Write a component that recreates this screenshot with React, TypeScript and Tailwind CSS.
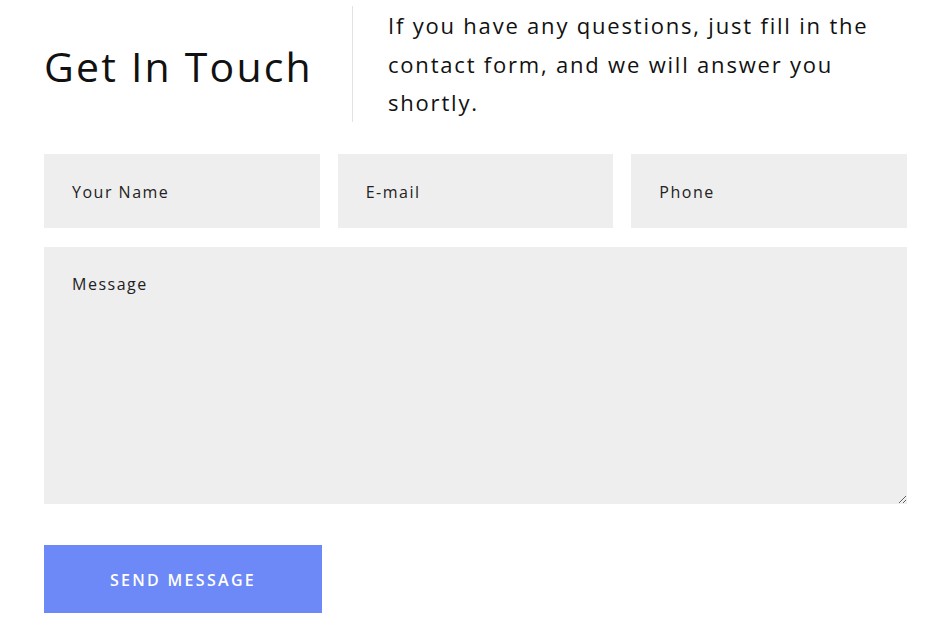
export default function App() {
  return (
    <div className="min-h-screen bg-white font-['Open_Sans',sans-serif] text-[#111]">
      <div className="ml-[44px] w-[863px] pt-[6px]">
        {/* Header */}
        <div className="flex items-center">
          <h1 className="w-[308px] shrink-0 pt-[6px] text-[41px] leading-none tracking-[2.2px] text-[#111]">
            Get In Touch
          </h1>
          <p className="border-l border-[#e2e2e2] pl-[35px] text-[22px] leading-[38.5px] tracking-[1.8px] text-[#111]">
            If you have any questions, just fill in the
            <br />
            contact form, and we will answer you
            <br />
            shortly.
          </p>
        </div>

        {/* Form */}
        <form className="mt-[32px] flex flex-col">
          <div className="grid grid-cols-3 gap-[18px]">
            <input
              placeholder="Your Name"
              className="h-[74px] bg-[#eeeeee] px-[28px] pt-[2px] text-[16px] tracking-[1.5px] text-[#222] outline-none placeholder:text-[#222]"
            />
            <input
              placeholder="E-mail"
              className="h-[74px] bg-[#eeeeee] px-[28px] pt-[2px] text-[16px] tracking-[1.5px] text-[#222] outline-none placeholder:text-[#222]"
            />
            <input
              placeholder="Phone"
              className="h-[74px] bg-[#eeeeee] px-[28px] pt-[2px] text-[16px] tracking-[1.5px] text-[#222] outline-none placeholder:text-[#222]"
            />
          </div>
          <textarea
            placeholder="Message"
            className="mt-[19px] block h-[257px] bg-[#eeeeee] px-[28px] pt-[25px] text-[16px] tracking-[1.5px] text-[#222] outline-none placeholder:text-[#222]"
          />
          <div className="mt-[41px]">
            <button
              type="button"
              className="h-[68px] w-[278px] bg-[#6c89f7] pt-[2px] text-[16px] font-semibold uppercase tracking-[2.3px] text-white"
            >
              Send Message
            </button>
          </div>
        </form>
      </div>
    </div>
  )
}
